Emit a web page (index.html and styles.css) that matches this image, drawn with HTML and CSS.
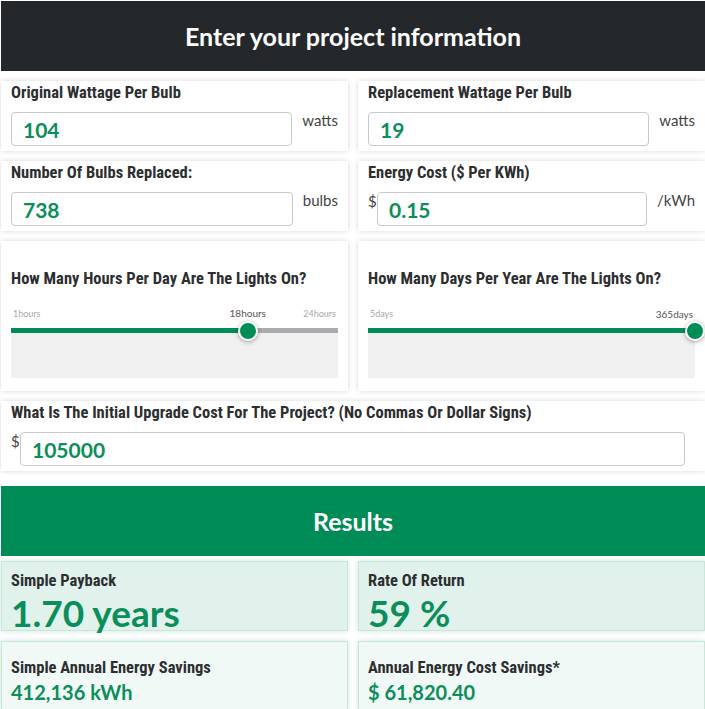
FILE: index.html
```html
<!DOCTYPE html>
<html lang="en">
<head>
    <meta charset="UTF-8">
    <meta name="viewport" content="width=device-width, initial-scale=1.0">
    <title>Lighting Retrofit Calculator</title>
    <link rel="stylesheet" href="styles.css">
</head>
<body>
    <div class="page">
        <h1 class="bar bar-dark">Enter your project information</h1>

        <div class="grid">
            <div class="card field">
                <label class="label">Original Wattage Per Bulb</label>
                <div class="row">
                    <input class="input" type="text" value="104">
                    <span class="unit">watts</span>
                </div>
            </div>
            <div class="card field">
                <label class="label">Replacement Wattage Per Bulb</label>
                <div class="row">
                    <input class="input" type="text" value="19">
                    <span class="unit">watts</span>
                </div>
            </div>
            <div class="card field">
                <label class="label">Number Of Bulbs Replaced:</label>
                <div class="row">
                    <input class="input" type="text" value="738">
                    <span class="unit">bulbs</span>
                </div>
            </div>
            <div class="card field">
                <label class="label">Energy Cost ($ Per KWh)</label>
                <div class="row">
                    <span class="prefix">$</span>
                    <input class="input" type="text" value="0.15">
                    <span class="unit">/kWh</span>
                </div>
            </div>

            <div class="card slider-card">
                <label class="label">How Many Hours Per Day Are The Lights On?</label>
                <div class="slider" style="--pct: 72.4%;">
                    <div class="ticks">
                        <span>1hours</span>
                        <span>24hours</span>
                    </div>
                    <span class="value-tag">18hours</span>
                    <div class="track"></div>
                    <div class="track-area"></div>
                    <span class="thumb"></span>
                </div>
            </div>
            <div class="card slider-card">
                <label class="label">How Many Days Per Year Are The Lights On?</label>
                <div class="slider" style="--pct: 100%;">
                    <div class="ticks">
                        <span>5days</span>
                        <span class="current">365days</span>
                    </div>
                    <div class="track"></div>
                    <div class="track-area"></div>
                    <span class="thumb"></span>
                </div>
            </div>

            <div class="card field wide">
                <label class="label">What Is The Initial Upgrade Cost For The Project? (No Commas Or Dollar Signs)</label>
                <div class="row">
                    <span class="prefix">$</span>
                    <input class="input" type="text" value="105000">
                    <span class="unit"></span>
                </div>
            </div>
        </div>

        <h2 class="bar bar-green">Results</h2>

        <div class="grid results">
            <div class="result main">
                <div class="label">Simple Payback</div>
                <div class="big">1.70 years</div>
            </div>
            <div class="result main">
                <div class="label">Rate Of Return</div>
                <div class="big">59 %</div>
            </div>
            <div class="result minor">
                <div class="label">Simple Annual Energy Savings</div>
                <div class="small">412,136 kWh</div>
            </div>
            <div class="result minor">
                <div class="label">Annual Energy Cost Savings*</div>
                <div class="small">$ 61,820.40</div>
            </div>
        </div>
    </div>
</body>
</html>
```

FILE: styles.css
```css
body {
    margin: 0;
    background: #fff;
    font-family: 'Lato', 'Liberation Sans', sans-serif;
    color: #2c2e30;
}
.page {
    padding: 1px 0 0 1px;
}
.bar {
    margin: 0;
    height: 70px;
    line-height: 70px;
    text-align: center;
    color: #fff;
    font-size: 25px;
    font-weight: 700;
}
.bar-dark { background: #25282b; }
.bar-green {
    background: #008c57;
    margin-top: 15px;
}
.grid {
    display: grid;
    grid-template-columns: repeat(2, minmax(0, 1fr));
    gap: 10px;
    margin-top: 10px;
}
.card {
    background: #fff;
    box-shadow: 0 0 5px rgba(0, 0, 0, 0.16);
    padding: 2px 10px 5px;
}
.wide { grid-column: 1 / span 2; }
.label {
    display: block;
    font-family: 'Roboto', 'Liberation Sans', sans-serif;
    font-stretch: 75%;
    font-weight: 700;
    font-size: 16.5px;
    line-height: 20px;
    color: #2c2e30;
    white-space: nowrap;
}
.field .label { margin-bottom: 9px; }
.row {
    display: flex;
    align-items: flex-start;
}
.prefix {
    font-size: 15px;
    line-height: 18px;
    color: #444;
    width: 9px;
}
.input {
    flex: 1;
    min-width: 0;
    width: 0;
    height: 34px;
    box-sizing: border-box;
    border: 1px solid #c9c9c9;
    border-radius: 4px;
    padding: 0 11px;
    font-family: 'Lato', sans-serif;
    font-weight: 700;
    font-size: 21px;
    color: #0b8e5a;
    outline: none;
}
.unit {
    margin-left: 10px;
    font-size: 15px;
    line-height: 16px;
    color: #444;
}

.slider-card { padding: 28px 10px 13px; }
.slider {
    position: relative;
    margin-top: 19px;
}
.ticks {
    display: flex;
    justify-content: space-between;
    font-size: 9px;
    line-height: 12px;
    color: #a7a7a7;
    padding: 0 2px;
}
.ticks .current { color: #555; font-size: 10px; }
.value-tag {
    position: absolute;
    top: -1px;
    left: var(--pct);
    transform: translateX(-50%);
    font-size: 10px;
    line-height: 12px;
    color: #555;
}
.track {
    margin-top: 8px;
    height: 5px;
    background: linear-gradient(to right, #008c57 var(--pct), #a9abae var(--pct));
}
.track-area {
    height: 45px;
    background: #f0f0f0;
}
.thumb {
    position: absolute;
    top: 22.5px;
    left: var(--pct);
    width: 16px;
    height: 16px;
    border: 2px solid #fff;
    border-radius: 50%;
    background: #008c57;
    box-shadow: 0 1px 4px rgba(0, 0, 0, 0.35);
    transform: translate(-50%, -50%);
}

.results { margin-top: 5px; }
.result {
    height: 70px;
    box-sizing: border-box;
    border: 1px solid #c8e6da;
    box-shadow: 0 0 5px rgba(0, 140, 87, 0.22);
    padding: 9px 9px 0;
}
.result.main { background: #e1f2ec; }
.result.minor {
    background: #f1f9f6;
    padding-top: 16px;
}
.big {
    margin-top: 4px;
    font-weight: 700;
    font-size: 37px;
    line-height: 36px;
    color: #0b8e5a;
}
.small {
    margin-top: 2px;
    font-weight: 700;
    font-size: 20px;
    line-height: 24px;
    color: #0b8e5a;
}
```
